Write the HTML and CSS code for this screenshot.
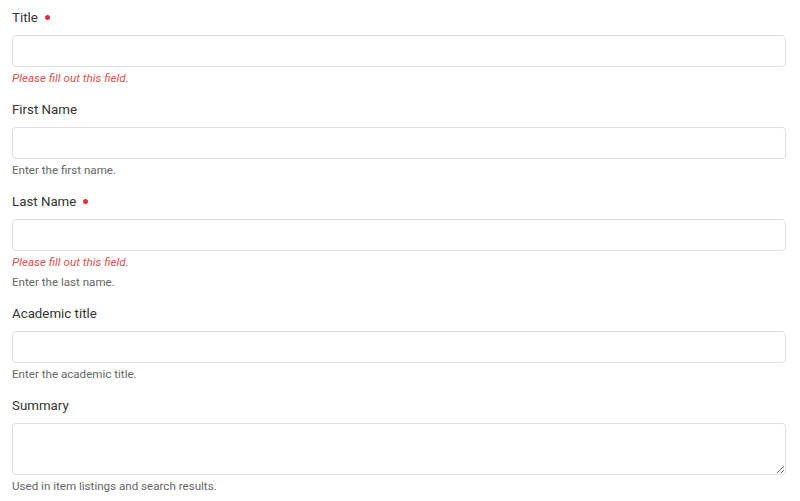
FILE: index.html
```html
<!DOCTYPE html>
<html lang="en">
<head>
<meta charset="utf-8">
<title>Form</title>
<link rel="stylesheet" href="styles.css">
</head>
<body>
<form class="form">
  <div class="field">
    <label class="label">Title <span class="req"></span></label>
    <input class="input" type="text">
    <div class="error">Please fill out this field.</div>
  </div>
  <div class="field">
    <label class="label">First Name</label>
    <input class="input" type="text">
    <div class="help">Enter the first name.</div>
  </div>
  <div class="field">
    <label class="label">Last Name <span class="req"></span></label>
    <input class="input" type="text">
    <div class="error">Please fill out this field.</div>
    <div class="help">Enter the last name.</div>
  </div>
  <div class="field">
    <label class="label">Academic title</label>
    <input class="input" type="text">
    <div class="help">Enter the academic title.</div>
  </div>
  <div class="field">
    <label class="label">Summary</label>
    <textarea class="textarea"></textarea>
    <div class="help">Used in item listings and search results.</div>
  </div>
</form>
</body>
</html>
```
FILE: styles.css
```css
html, body {
  margin: 0;
  padding: 0;
  background: #fff;
}
body {
  font-family: Roboto, "Liberation Sans", Arial, sans-serif;
  color: #333;
}
.form {
  display: flex;
  flex-direction: column;
  gap: 12px;
  padding: 8px 14px 0 12px;
}
.field {
  display: flex;
  flex-direction: column;
}
.label {
  display: flex;
  align-items: center;
  gap: 7px;
  font-size: 13.3px;
  line-height: 20px;
  color: #333;
  margin-bottom: 7px;
}
.req {
  display: inline-block;
  width: 5px;
  height: 5px;
  border-radius: 50%;
  background: #e0323c;
  margin-top: -2px;
}
.input, .textarea {
  box-sizing: border-box;
  width: 100%;
  height: 32px;
  border: 1px solid #e0e0e0;
  border-radius: 4px;
  margin: 0;
  padding: 4px 8px;
  font: inherit;
  background: #fff;
}
.textarea {
  height: 52px;
  resize: vertical;
  display: block;
}
.input + div, .textarea + div {
  margin-top: 1px;
}
.error {
  font-size: 11.7px;
  line-height: 20px;
  font-style: italic;
  color: #d9534f;
}
.help {
  font-size: 11.6px;
  line-height: 20px;
  color: #666;
}
```
